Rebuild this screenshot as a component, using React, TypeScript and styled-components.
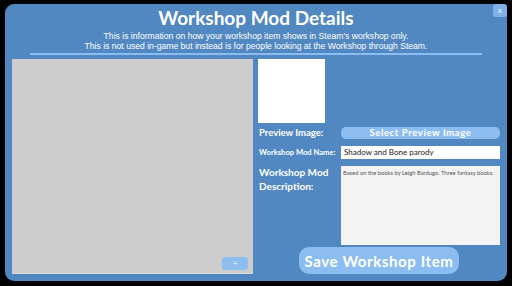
import styled, { createGlobalStyle } from "styled-components";

const GlobalStyle = createGlobalStyle`
  html, body {
    margin: 0;
    padding: 0;
    background: #000;
  }
  body {
    width: 512px;
    height: 286px;
    overflow: hidden;
  }
`;

const Panel = styled.div`
  position: relative;
  box-sizing: border-box;
  width: 502px;
  height: 277px;
  margin: 4px 0 0 5px;
  padding: 3px 7px 7px 7px;
  background: #5188c1;
  border-radius: 9px;
  display: flex;
  flex-direction: column;
  font-family: Lato, "Open Sans", sans-serif;
  color: #fff;
`;

const CloseButton = styled.button`
  position: absolute;
  top: 0;
  right: 0;
  width: 14px;
  height: 13px;
  padding: 0;
  border: none;
  border-radius: 3px;
  background: #7fb1e8;
  color: #fff;
  font-family: "Liberation Sans", sans-serif;
  font-size: 8px;
  line-height: 13px;
  text-align: center;
`;

const Title = styled.h1`
  margin: 0;
  font-size: 19px;
  line-height: 22px;
  font-weight: 700;
  text-align: center;
`;

const Subtitle = styled.p`
  margin: 2px 0 0 0;
  font-family: "Liberation Sans", Arial, sans-serif;
  font-size: 8.6px;
  line-height: 10px;
  text-align: center;
`;

const Divider = styled.hr`
  align-self: center;
  width: 452px;
  height: 2px;
  margin: 2px 0 4px 0;
  border: none;
  background: #8cbdf0;
`;

const Body = styled.div`
  flex: 1;
  display: grid;
  grid-template-columns: 241px 242px;
  column-gap: 5px;
  min-height: 0;
`;

const Gallery = styled.div`
  box-sizing: border-box;
  background: #cdcdcd;
  border-bottom: 1px solid #d9d9d9;
  display: flex;
  align-items: flex-end;
  justify-content: flex-end;
  padding: 0 5px 3px 0;
`;

const SmallButton = styled.button`
  width: 26px;
  height: 13px;
  padding: 0;
  border: none;
  border-radius: 3px;
  background: #8ebdf0;
  color: #fff;
  font-size: 7px;
  line-height: 13px;
`;

const Side = styled.div`
  display: flex;
  flex-direction: column;
`;

const PreviewBox = styled.div`
  width: 67px;
  height: 64px;
  background: #fff;
`;

const Row = styled.div<{ $top: number; $height: number }>`
  display: grid;
  grid-template-columns: 83px 159px;
  align-items: center;
  margin-top: ${(p) => p.$top}px;
  height: ${(p) => p.$height}px;
`;

const Label = styled.span<{ $size: number }>`
  padding-left: 1px;
  font-size: ${(p) => p.$size}px;
  line-height: 1.35;
  font-weight: 700;
  white-space: nowrap;
`;

const TopLabel = styled(Label)`
  align-self: start;
`;

const PillButton = styled.button`
  height: 12px;
  padding: 0;
  border: none;
  border-radius: 5px;
  background: #8cbdf0;
  color: #fff;
  font-family: Lato, sans-serif;
  font-weight: 700;
  font-size: 9.5px;
  letter-spacing: 0.6px;
  line-height: 12px;
`;

const TextInput = styled.div`
  box-sizing: border-box;
  height: 13px;
  background: #fff;
  color: #222;
  font-size: 8px;
  line-height: 13px;
  padding-left: 3px;
  white-space: nowrap;
`;

const TextArea = styled.div`
  box-sizing: border-box;
  height: 79px;
  background: #f3f3f3;
  color: #555;
  font-size: 5.8px;
  padding: 3px 2px;
  white-space: nowrap;
  overflow: hidden;
`;

const SaveButton = styled.button`
  align-self: center;
  width: 160px;
  height: 27px;
  margin-top: 2px;
  padding: 0;
  border: none;
  border-radius: 10px;
  background: #8cbdf0;
  color: #fff;
  font-family: Lato, sans-serif;
  font-weight: 700;
  font-size: 15px;
  letter-spacing: 0.6px;
  white-space: nowrap;
`;

const App = () => {
  return (
    <>
      <GlobalStyle />
      <Panel>
        <CloseButton>x</CloseButton>
        <Title>Workshop Mod Details</Title>
        <Subtitle>
          This is information on how your workshop item shows in Steam's
          workshop only.
          <br />
          This is not used in-game but instead is for people looking at the
          Workshop through Steam.
        </Subtitle>
        <Divider />
        <Body>
          <Gallery>
            <SmallButton>+</SmallButton>
          </Gallery>
          <Side>
            <PreviewBox />
            <Row $top={4} $height={12}>
              <Label $size={9.5}>Preview Image:</Label>
              <PillButton>Select Preview Image</PillButton>
            </Row>
            <Row $top={7} $height={13}>
              <Label $size={7.6}>Workshop Mod Name:</Label>
              <TextInput>Shadow and Bone parody</TextInput>
            </Row>
            <Row $top={7} $height={79}>
              <TopLabel $size={10}>
                Workshop Mod
                <br />
                Description:
              </TopLabel>
              <TextArea>
                Based on the books by Leigh Bardugo. Three fantasy books.
              </TextArea>
            </Row>
            <SaveButton>Save Workshop Item</SaveButton>
          </Side>
        </Body>
      </Panel>
    </>
  );
};

export default App;
